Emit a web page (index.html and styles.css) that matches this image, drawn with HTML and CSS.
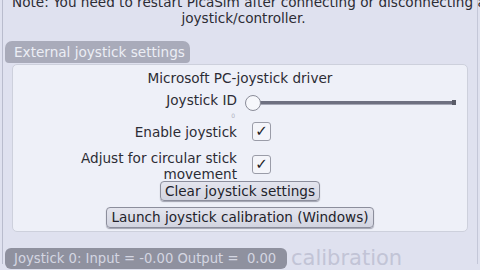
FILE: index.html
```html
<!DOCTYPE html>
<html>
<head>
<meta charset="utf-8">
<link rel="stylesheet" href="styles.css">
</head>
<body>
<div class="frame">
  <div class="note"><span class="l1">Note: You need to restart PicaSim after connecting or disconnecting a</span><br>joystick/controller.</div>
  <div class="tab">External joystick settings</div>
  <div class="panel">
    <div class="driver">Microsoft PC-joystick driver</div>
    <div class="grid">
      <div class="label id-label">Joystick ID<span class="tiny">0</span></div>
      <div class="slider"><span class="track"></span><span class="knob"></span><span class="cap"></span></div>
      <div class="label en-label">Enable joystick</div>
      <div class="ctl"><span class="check">&#10003;</span></div>
      <div class="label two">Adjust for circular stick<br>movement</div>
      <div class="ctl ctl2"><span class="check">&#10003;</span></div>
    </div>
    <div class="btnrow first"><span class="btn">Clear joystick settings</span></div>
    <div class="btnrow"><span class="btn wide">Launch joystick calibration (Windows)</span></div>
  </div>
  <div class="bottom">
    <span class="status">Joystick 0: Input = -0.00 Output =&nbsp; 0.00</span>
    <span class="ghost">calibration</span>
  </div>
</div>
</body>
</html>
```

FILE: styles.css
```css
html, body {
  margin: 0;
  padding: 0;
}
body {
  width: 480px;
  height: 270px;
  overflow: hidden;
  background: #dfe1ef;
  font-family: "DejaVu Sans", sans-serif;
  font-size: 13.6px;
  color: #2c2c34;
}
.frame {
  margin: 0 2px;
  height: 270px;
  border-left: 1px solid #b9bccd;
  border-right: 1px solid #c4c7d8;
  box-sizing: border-box;
  padding: 0 2px;
}
.note {
  text-align: center;
  line-height: 16px;
  margin-top: -6px;
  padding-left: 7px;
  white-space: nowrap;
}
.tab {
  margin-top: 15px;
  width: 185px;
  height: 22px;
  line-height: 22px;
  background: #a9abba;
  color: #eceef5;
  border-radius: 7px 7px 4px 4px;
  padding-left: 9px;
  box-sizing: border-box;
}
.panel {
  margin: 1px 7px 0 7px;
  height: 168px;
  background: #eef0f8;
  border: 1px solid #cdd0dc;
  border-radius: 5px;
  box-sizing: border-box;
  padding-top: 4px;
}
.driver {
  text-align: center;
  line-height: 18px;
  height: 22px;
}
.grid {
  display: grid;
  grid-template-columns: 224px 1fr;
  column-gap: 8px;
  row-gap: 0;
}
.label {
  text-align: right;
  line-height: 18px;
}
.id-label {
  position: relative;
  height: 30px;
}
.tiny {
  position: absolute;
  right: 2px;
  top: 16px;
  font-size: 6px;
  color: #b0b2c0;
}
.slider {
  position: relative;
  height: 30px;
}
.track {
  position: absolute;
  left: 14px;
  right: 11px;
  top: 10px;
  height: 3px;
  background: #6e7080;
  border-bottom: 1px solid #a6a8b6;
}
.cap {
  position: absolute;
  right: 11px;
  top: 9px;
  width: 4px;
  height: 5px;
  background: #5a5c68;
}
.knob {
  position: absolute;
  left: 0;
  top: 4px;
  width: 14px;
  height: 14px;
  border-radius: 50%;
  border: 1px solid #8a8c98;
  background: #f6f7fb;
  z-index: 1;
}
.en-label {
  height: 34px;
  line-height: 22px;
}
.ctl {
  height: 34px;
}
.two {
  line-height: 16px;
  height: 32px;
  margin-top: -5px;
}
.ctl.ctl2 {
  height: 27px;
}
.check {
  display: block;
  width: 17px;
  height: 17px;
  border: 1px solid #9a9ca8;
  border-radius: 3px;
  background: #f4f5fa;
  text-align: center;
  line-height: 17px;
  font-size: 15px;
  color: #1c1c24;
  margin-left: 7px;
  margin-top: 1px;
}
.ctl2 .check {
  margin-top: 0;
}
.btnrow {
  text-align: center;
  height: 26px;
}
.btnrow.first {
  margin-top: -1px;
}
.btn {
  display: inline-block;
  padding: 0 4px;
  height: 18px;
  line-height: 18px;
  border: 1px solid #8c8e9c;
  border-radius: 4px;
  background: linear-gradient(#e4e5ee, #d2d4e0);
  box-shadow: 0 1px 1px #a0a2b0;
  color: #22222a;
}
.wide {
  height: 19px;
  line-height: 19px;
}
.bottom {
  display: flex;
  align-items: center;
  margin-top: 16px;
}
.status {
  height: 21px;
  line-height: 21px;
  width: 282px;
  box-sizing: border-box;
  padding-left: 9px;
  background: #8f919f;
  color: #d4d6e2;
  border-radius: 6px;
  white-space: nowrap;
  overflow: hidden;
  font-size: 13.2px;
}
.ghost {
  margin-left: 4px;
  font-size: 21px;
  color: #c2c4d6;
  line-height: 21px;
}
```
